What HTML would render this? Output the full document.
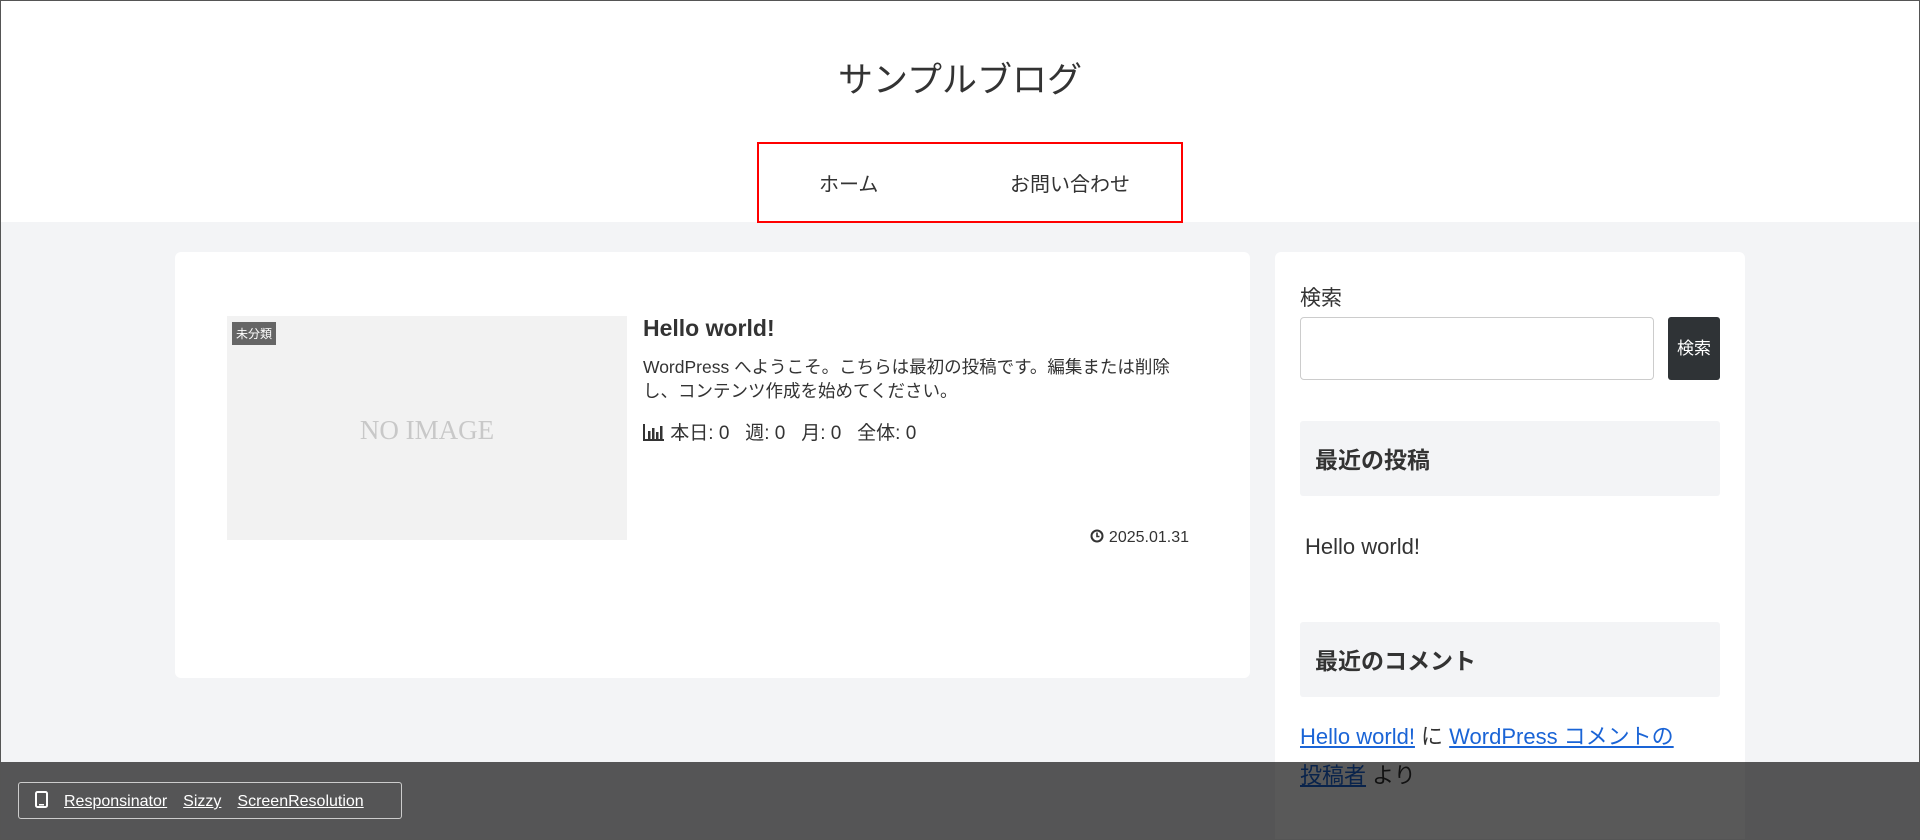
<!DOCTYPE html>
<html><head><meta charset="utf-8"><style>
*{box-sizing:border-box;margin:0;padding:0}
html{width:1920px;height:840px;overflow:hidden}
body{width:1920px;height:840px;overflow:hidden;background:#f3f4f6;font-family:"Liberation Sans","Noto Sans CJK JP",sans-serif;color:#333;position:relative}
.frame{position:absolute;inset:0;border:1px solid #555;pointer-events:none;z-index:10}
header{position:absolute;left:0;top:0;width:1920px;height:222px;background:#fff}
.title{position:absolute;left:0;width:1920px;top:52px;text-align:center;font-size:35px;color:#333}
.nav{position:absolute;left:757px;top:142px;width:426px;height:81px;border:2px solid #f00}
.nav span{position:absolute;top:24px;font-size:20px;color:#333}
.card{position:absolute;background:#fff;border-radius:6px}
.thumb{position:absolute;left:227px;top:316px;width:400px;height:224px;background:#f2f2f2}
.badge{position:absolute;left:5px;top:6px;background:#666;color:#fff;font-size:12px;padding:3px 4px}
.noimg{position:absolute;left:0;right:0;top:99px;text-align:center;font-family:"Liberation Serif",serif;font-size:27px;color:#c8c8c8}
.wh{position:absolute;left:1300px;width:420px;height:75px;background:#f3f4f6;border-radius:3px;font-weight:bold;font-size:23px;padding:20px 15px}
a{color:#1a64d6;text-decoration:underline}
.overlay{position:absolute;left:0;top:762px;width:1920px;height:78px;background:rgba(0,0,0,.65)}
.tb{position:absolute;left:18px;top:20px;width:384px;height:37px;border:1px solid #ccc;border-radius:3px;color:#fff;font-size:16px;padding:8px 0 0 16px}
.tb a{color:#fff;margin-left:16px}
</style></head><body>
<header>
<div class="title">サンプルブログ</div>
<div class="nav"><span style="left:60px">ホーム</span><span style="left:251px">お問い合わせ</span></div>
</header>
<div class="card" style="left:175px;top:252px;width:1075px;height:426px"></div>
<div class="thumb"><div class="badge">未分類</div><div class="noimg">NO IMAGE</div></div>
<div style="position:absolute;left:643px;top:315px;font-size:23px;font-weight:bold">Hello world!</div>
<div style="position:absolute;left:643px;top:355px;width:548px;font-size:17.5px;line-height:24px">WordPress へようこそ。こちらは最初の投稿です。編集または削除し、コンテンツ作成を始めてください。</div>
<div style="position:absolute;left:643px;top:418px;font-size:19px"><svg width="22" height="18" viewBox="0 0 22 18" style="vertical-align:-2px"><path d="M1 1V17H21" stroke="#333" stroke-width="2" fill="none"/><rect x="5" y="8" width="2.5" height="8" fill="#333"/><rect x="9" y="5" width="2.5" height="11" fill="#333"/><rect x="13" y="9" width="2.5" height="7" fill="#333"/><rect x="17" y="3" width="2.5" height="13" fill="#333"/></svg> 本日: 0&nbsp;&nbsp; 週: 0&nbsp;&nbsp; 月: 0&nbsp;&nbsp; 全体: 0</div>
<div style="position:absolute;right:731px;top:529px;font-size:16px"><svg width="14" height="14" viewBox="0 0 14 14" style="vertical-align:-1px"><circle cx="7" cy="7" r="5.5" fill="none" stroke="#333" stroke-width="2"/><path d="M7 3.5V7.5H9.5" stroke="#333" stroke-width="1.6" fill="none"/></svg> 2025.01.31</div>
<div class="card" style="left:1275px;top:252px;width:470px;height:600px"></div>
<div style="position:absolute;left:1300px;top:282px;font-size:21px">検索</div>
<div style="position:absolute;left:1300px;top:317px;width:354px;height:63px;border:1px solid #ccc;border-radius:4px;background:#fff"></div>
<div style="position:absolute;left:1668px;top:317px;width:52px;height:63px;background:#2f3336;border-radius:3px;color:#fff;font-size:17px;text-align:center;line-height:63px">検索</div>
<div class="wh" style="top:421px">最近の投稿</div>
<div style="position:absolute;left:1305px;top:534px;font-size:22px">Hello world!</div>
<div class="wh" style="top:622px">最近のコメント</div>
<div style="position:absolute;left:1300px;top:717px;width:420px;font-size:22px;line-height:39px"><a>Hello world!</a> に <a>WordPress コメントの</a><br><a>投稿者</a> より</div>
<div class="overlay"><div class="tb"><svg width="13" height="17" viewBox="0 0 13 17" style="vertical-align:-2px"><rect x="1" y="1" width="11" height="15" rx="1.5" fill="none" stroke="#fff" stroke-width="2"/><rect x="4" y="13" width="5" height="1.5" fill="#fff"/></svg><a>Responsinator</a><a>Sizzy</a><a>ScreenResolution</a></div></div>
<div class="frame"></div>
</body></html>
